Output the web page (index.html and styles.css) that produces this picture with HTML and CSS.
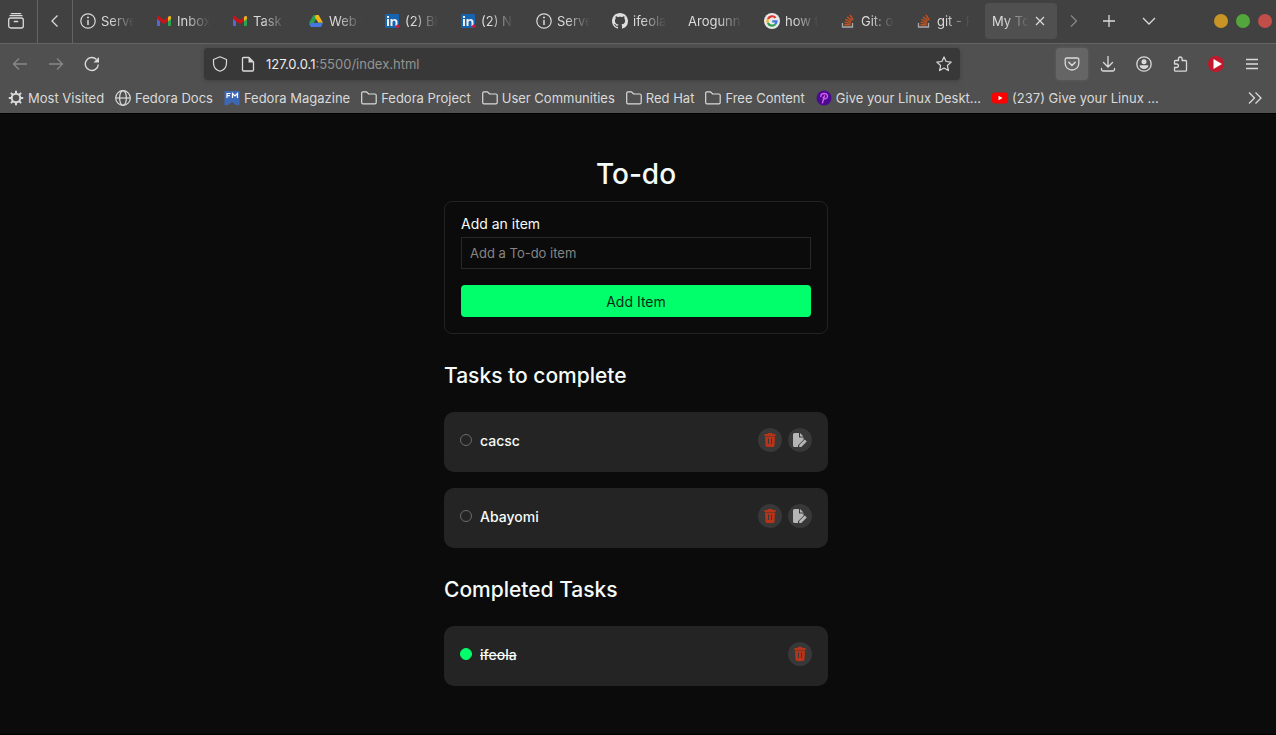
FILE: index.html
```html
<!DOCTYPE html>
<html lang="en">
<head>
<meta charset="utf-8">
<title>My ToDo</title>
<link rel="stylesheet" href="styles.css">
</head>
<body>
<svg class="defs" aria-hidden="true">
  <symbol id="info" viewBox="0 0 16 16"><g fill="none" stroke="currentColor" stroke-width="1.2"><circle cx="8" cy="8" r="7.2"/><path d="M8 7v5" stroke-width="1.5"/></g><circle cx="8" cy="4.6" r="1" fill="currentColor"/></symbol>
  <symbol id="gmail" viewBox="0 0 16 16"><path fill="#5468d8" d="M1 5l3 2.2V13H2a1 1 0 0 1-1-1z"/><path fill="#2aa350" d="M12 7.2L15 5v7a1 1 0 0 1-1 1h-2z"/><path fill="#f0b020" d="M12 4l1-.8c1-.6 2 0 2 1.100V6l-3 2.200z"/><path fill="#c5151a" d="M1 6V4.300c0-1.200 1.200-1.700 2-1.100l5 3.700 4-3v4.300L8 11 4 8.200z"/></symbol>
  <symbol id="drive" viewBox="0 0 16 16"><path fill="#2c9f50" d="M5.500 2h5L4 13.500 1 9.800z"/><path fill="#f2b619" d="M8 2h2.600L15 9.800h-4.700L6.800 4z"/><path fill="#4379dc" d="M5 9.800h10L13 14H3L1 11z"/><path fill="#444" d="M8 6.500l2 3.300H6z"/></symbol>
  <symbol id="linkedin" viewBox="0 0 16 16"><rect x="1" y="1" width="14" height="14" rx="1" fill="#1663b0"/><path fill="#eee" d="M3 6h2v7H3zM3 3h2v2H3zM6.500 6h2v1c1.200-1.800 5-1.500 5 1.700V13h-2V9.300c0-2.300-3-2.100-3 0V13h-2z"/><circle cx="13.800" cy="13.200" r="1.700" fill="#d01835"/></symbol>
  <symbol id="github" viewBox="0 0 16 16"><path fill="#ddd" d="M8 0C3.580 0 0 3.580 0 8c0 3.540 2.290 6.530 5.470 7.590.4.070.55-.17.55-.38 0-.19-.01-.82-.01-1.490-2.010.37-2.530-.49-2.690-.94-.09-.23-.48-.94-.82-1.130-.28-.15-.68-.52-.01-.53.63-.01 1.080.58 1.230.82.720 1.210 1.870.87 2.330.66.07-.52.28-.87.51-1.070-1.780-.2-3.640-.89-3.640-3.950 0-.87.31-1.590.82-2.150-.08-.2-.36-1.020.08-2.120 0 0 .67-.21 2.200.82.640-.18 1.320-.27 2-.27s1.360.09 2 .27c1.530-1.040 2.200-.82 2.200-.82.44 1.100.16 1.920.08 2.120.51.56.82 1.270.82 2.150 0 3.070-1.870 3.750-3.650 3.950.29.25.54.73.54 1.480 0 1.070-.01 1.930-.01 2.200 0 .21.15.46.55.38A8.010 8.010 0 0 0 16 8c0-4.420-3.580-8-8-8z"/></symbol>
  <symbol id="google" viewBox="0 0 16 16"><circle cx="8" cy="8" r="8" fill="#e8e8e8"/><g fill="none" stroke-width="2.200"><path stroke="#d93a30" d="M11.600 4.900A4.600 4.600 0 0 0 3.900 6"/><path stroke="#efb51b" d="M3.900 6a4.600 4.600 0 0 0 0 4"/><path stroke="#2b9d4d" d="M3.900 10a4.600 4.600 0 0 0 7.200 1.500"/><path stroke="#3e78df" d="M11.100 11.500A4.600 4.600 0 0 0 12.500 8.300H8.200"/></g></symbol>
  <symbol id="stack" viewBox="0 0 16 16"><path fill="none" stroke="#aaa" stroke-width="1.300" d="M2.500 10v4h10v-4"/><path fill="none" stroke="#c5511d" stroke-width="1.400" d="M4.500 11.800h6M4.600 9.200l6 1.200M5.400 6.400l5.600 2.700M7.200 3.900l4.600 3.900M10 2l3.200 5"/></symbol>
  <symbol id="folder" viewBox="0 0 16 16"><path fill="none" stroke="currentColor" stroke-width="1.200" stroke-linejoin="round" d="M.7 3a1.200 1.200 0 0 1 1.200-1.200h3.600L7.700 4h6.100A1.300 1.300 0 0 1 15.200 5.300v7.200a1.300 1.300 0 0 1-1.300 1.300H2A1.300 1.300 0 0 1 .7 12.500z"/></symbol>
  <symbol id="trash" viewBox="0 0 16 16"><path fill="#b83418" fill-rule="evenodd" d="M6 1h4l.7 1H13.500v2h-11V2h2.800zM3 4.500h10l-.5 9a1.700 1.700 0 0 1-1.700 1.500H5.200a1.700 1.700 0 0 1-1.700-1.500zM6 6.500v5.500h1V6.500zm3 0v5.500h1V6.500z"/></symbol>
  <symbol id="edit" viewBox="0 0 16 16"><path fill="#b5b5b5" d="M2.500 1H7v4.500h4.500v2.200L6 13.300V15H2.500A1.500 1.500 0 0 1 1 13.500v-11A1.500 1.500 0 0 1 2.500 1zM8 1l3.500 3.500H8zM7.200 15v-2.100l5.500-5.500 2.100 2.100L9.300 15z"/></symbol>
</svg>

<header class="browser">
  <div class="tabstrip">
    <button class="chrome-btn view" aria-label="Recent browsing"><svg class="icon" viewBox="0 0 16 16"><g fill="none" stroke="currentColor" stroke-width="1.300" stroke-linecap="round"><rect x=".7" y="5" width="14.600" height="10" rx="2"/><path d="M2 2.700h12M3.300.7h9.400M6.300 8.500h3.400"/></g></svg></button>
    <button class="chrome-btn prev" aria-label="Scroll tabs left"><svg class="icon" viewBox="0 0 16 16"><path fill="none" stroke="currentColor" stroke-width="1.300" d="M10.500 2.500L5 8l5.500 5.500"/></svg></button>
    <nav class="tabs" aria-label="Tabs">
      <a class="tab" href="#"><svg class="icon"><use href="#info"/></svg><span>Serve</span></a>
      <a class="tab" href="#"><svg class="icon"><use href="#gmail"/></svg><span>Inbox</span></a>
      <a class="tab" href="#"><svg class="icon"><use href="#gmail"/></svg><span>Task</span></a>
      <a class="tab" href="#"><svg class="icon"><use href="#drive"/></svg><span>Web I</span></a>
      <a class="tab" href="#"><svg class="icon"><use href="#linkedin"/></svg><span>(2) Bl</span></a>
      <a class="tab" href="#"><svg class="icon"><use href="#linkedin"/></svg><span>(2) N</span></a>
      <a class="tab" href="#"><svg class="icon"><use href="#info"/></svg><span>Serve</span></a>
      <a class="tab" href="#"><svg class="icon"><use href="#github"/></svg><span>ifeola</span></a>
      <a class="tab" href="#"><span>Arogunn</span></a>
      <a class="tab" href="#"><svg class="icon"><use href="#google"/></svg><span>how t</span></a>
      <a class="tab" href="#"><svg class="icon"><use href="#stack"/></svg><span>Git: o</span></a>
      <a class="tab" href="#"><svg class="icon"><use href="#stack"/></svg><span>git - P</span></a>
      <div class="tab active"><span>My To</span><button class="close" aria-label="Close tab"><svg viewBox="0 0 10 10"><path fill="none" stroke="currentColor" stroke-width="1.200" d="M1 1l8 8M9 1L1 9"/></svg></button></div>
    </nav>
    <button class="chrome-btn next dim" aria-label="Scroll tabs right"><svg class="icon" viewBox="0 0 16 16"><path fill="none" stroke="currentColor" stroke-width="1.300" d="M5 2.500L10.500 8 5 13.500"/></svg></button>
    <button class="chrome-btn" aria-label="New tab"><svg class="icon" viewBox="0 0 16 16"><path fill="none" stroke="currentColor" stroke-width="1.300" d="M8 2v12M2 8h12"/></svg></button>
    <button class="chrome-btn list" aria-label="List all tabs"><svg class="icon" viewBox="0 0 16 16"><path fill="none" stroke="currentColor" stroke-width="1.300" d="M2 5l6 6 6-6"/></svg></button>
    <div class="window-controls">
      <button class="dot amber" aria-label="Minimize"></button>
      <button class="dot green" aria-label="Maximize"></button>
      <button class="dot red" aria-label="Close window"></button>
    </div>
  </div>

  <div class="toolbar">
    <div class="tools">
      <button class="tool dim" aria-label="Back"><svg class="icon" viewBox="0 0 16 16"><path fill="none" stroke="currentColor" stroke-width="1.300" d="M15 8H1.500M7 2.500L1.500 8 7 13.500"/></svg></button>
      <button class="tool dim" aria-label="Forward"><svg class="icon" viewBox="0 0 16 16"><path fill="none" stroke="currentColor" stroke-width="1.300" d="M1 8h13.500M9 2.500L14.500 8 9 13.500"/></svg></button>
      <button class="tool" aria-label="Reload"><svg class="icon" viewBox="0 0 16 16"><path fill="none" stroke="currentColor" stroke-width="1.400" d="M14.300 8.500A6.500 6.500 0 1 1 12.500 3.500"/><path fill="currentColor" d="M15 1v5.500H9.500z"/></svg></button>
    </div>
    <div class="urlbar">
      <svg class="icon" viewBox="0 0 16 16"><path fill="none" stroke="currentColor" stroke-width="1.200" stroke-linejoin="round" d="M8 .8L14.500 3.500V7c0 4-2.500 7-6.500 8.300C4 14 1.500 11 1.500 7V3.500z"/></svg>
      <svg class="icon doc" viewBox="0 0 16 16"><path fill="none" stroke="currentColor" stroke-width="1.300" stroke-linejoin="round" d="M2.500 2.500a1 1 0 0 1 1-1H9L13.500 6v8a1 1 0 0 1-1 1h-9a1 1 0 0 1-1-1z"/><path fill="currentColor" d="M8.500 1.500L13.500 6.500h-5z"/></svg>
      <div class="url">127.0.0.1<span>:5500/index.html</span></div>
      <button class="star" aria-label="Bookmark this page"><svg class="icon" viewBox="0 0 16 16"><path fill="none" stroke="currentColor" stroke-width="1.200" stroke-linejoin="round" d="M8 .9l2.100 4.600 5.100.6-3.800 3.400 1 5.100L8 12.100l-4.400 2.500 1-5.100L.8 6.100l5.100-.6z"/></svg></button>
    </div>
    <div class="tools">
      <button class="tool pocket" aria-label="Save to Pocket"><svg class="icon" viewBox="0 0 16 16"><g fill="none" stroke="currentColor" stroke-width="1.300" stroke-linecap="round"><path d="M2.500 2h11a1.300 1.300 0 0 1 1.300 1.300V7.500a6.800 6.500 0 0 1-13.600 0V3.300A1.300 1.300 0 0 1 2.500 2z"/><path d="M4.800 6.300L8 9.500l3.200-3.200" stroke-width="1.500"/></g></svg></button>
      <button class="tool" aria-label="Downloads"><svg class="icon" viewBox="0 0 16 16"><path fill="none" stroke="currentColor" stroke-width="1.300" stroke-linecap="round" d="M8 .5v10M3.500 6.500L8 11l4.500-4.500M1.500 12.500v.7a1.800 1.800 0 0 0 1.800 1.800h9.400a1.800 1.800 0 0 0 1.800-1.800v-.7"/></svg></button>
      <button class="tool" aria-label="Account"><svg class="icon" viewBox="0 0 16 16"><circle cx="8" cy="8" r="7.200" fill="none" stroke="currentColor" stroke-width="1.300"/><circle cx="8" cy="5.800" r="2.500" fill="currentColor"/><path fill="currentColor" d="M3.500 9.200h9C12 11.800 10.500 13 8 13s-4-1.200-4.500-3.800z"/></svg></button>
      <button class="tool" aria-label="Extensions"><svg class="icon" viewBox="0 0 16 16"><path fill="none" stroke="currentColor" stroke-width="1.300" stroke-linejoin="round" d="M2.500 8V5.500a1 1 0 0 1 1-1h3V2.800a1.800 1.800 0 0 1 3.600 0v1.700h3.400a1 1 0 0 1 1 1v8.700a1 1 0 0 1-1 1h-10a1 1 0 0 1-1-1v-2.700h2.200a1.700 1.700 0 0 0 0-3.500z"/></svg></button>
      <button class="tool" aria-label="Video extension"><svg class="icon" viewBox="0 0 16 16"><circle cx="8" cy="8" r="8" fill="#c2182b"/><path d="M5.500 3v10L14 8z" fill="#fff"/></svg></button>
      <button class="tool" aria-label="Application menu"><svg class="icon" viewBox="0 0 16 16"><path fill="none" stroke="currentColor" stroke-width="1.300" d="M2 3.500h12M2 8h12M2 12.500h12"/></svg></button>
    </div>
  </div>

  <nav class="bookmarks" aria-label="Bookmarks">
    <a href="#"><svg class="mark" viewBox="0 0 16 16"><g fill="none" stroke="currentColor"><circle cx="8" cy="8" r="4.300" stroke-width="2"/><path stroke-width="2" d="M8 .8v3M8 12.200v3M.8 8h3M12.200 8h3M2.900 2.900l2 2M11.100 11.100l2 2M13.100 2.900l-2 2M4.900 11.100l-2 2"/></g></svg>Most Visited</a>
    <a href="#"><svg class="mark" viewBox="0 0 16 16"><g fill="none" stroke="currentColor" stroke-width="1.200"><circle cx="8" cy="8" r="7.300"/><ellipse cx="8" cy="8" rx="3.400" ry="7.300"/><path d="M.7 8h14.600"/></g></svg>Fedora Docs</a>
    <a href="#"><svg class="mark" viewBox="0 0 16 16"><path fill="#3c68b5" d="M.5 1h15v14H12l-4-3-4 3H.5z"/><path fill="none" stroke="#fff" stroke-width="1.200" d="M3 8V3.500h3.500M3 5.700h3M8.500 8V3.500L11 6l2.500-2.500V8"/></svg>Fedora Magazine</a>
    <a href="#"><svg class="mark"><use href="#folder"/></svg>Fedora Project</a>
    <a href="#"><svg class="mark"><use href="#folder"/></svg>User Communities</a>
    <a href="#"><svg class="mark"><use href="#folder"/></svg>Red Hat</a>
    <a href="#"><svg class="mark"><use href="#folder"/></svg>Free Content</a>
    <a href="#"><svg class="mark" viewBox="0 0 16 16"><circle cx="8" cy="8" r="7.500" fill="#4b0b91"/><path fill="none" stroke="#d65cf0" stroke-width="1.400" stroke-linecap="round" d="M4.800 6.500C4.800 2.500 11.500 2.500 11.500 6.300c0 3-3.800 3.300-4.300 1.200M8.500 5.800L6.500 12.800"/></svg>Give your Linux Deskt…</a>
    <a href="#"><svg class="mark" viewBox="0 0 16 16"><rect x="0" y="2.500" width="16" height="11" rx="3" fill="#f00"/><path fill="#fff" d="M6.500 5.800v4.400l4-2.200z"/></svg>(237) Give your Linux …</a>
    <button class="more" aria-label="More bookmarks"><svg class="icon" viewBox="0 0 16 16"><path fill="none" stroke="currentColor" stroke-width="1.300" d="M2 2.500L7.500 8 2 13.500M8.500 2.500L14 8l-5.500 5.500"/></svg></button>
  </nav>
</header>

<main class="page">
  <div class="todo">
    <h1>To-do</h1>
    <form class="add">
      <label for="item">Add an item</label>
      <input id="item" type="text" placeholder="Add a To-do item">
      <button type="button">Add Item</button>
    </form>

    <h2>Tasks to complete</h2>
    <ul class="tasks">
      <li class="task">
        <input type="checkbox" id="t1"><label for="t1">cacsc</label>
        <div class="actions">
          <button aria-label="Delete cacsc"><svg><use href="#trash"/></svg></button>
          <button aria-label="Edit cacsc"><svg><use href="#edit"/></svg></button>
        </div>
      </li>
      <li class="task">
        <input type="checkbox" id="t2"><label for="t2">Abayomi</label>
        <div class="actions">
          <button aria-label="Delete Abayomi"><svg><use href="#trash"/></svg></button>
          <button aria-label="Edit Abayomi"><svg><use href="#edit"/></svg></button>
        </div>
      </li>
    </ul>

    <h2>Completed Tasks</h2>
    <ul class="tasks">
      <li class="task">
        <input type="checkbox" id="t3" checked><label for="t3">ifeola</label>
        <div class="actions">
          <button aria-label="Delete ifeola"><svg><use href="#trash"/></svg></button>
        </div>
      </li>
    </ul>
  </div>
</main>
</body>
</html>
```

FILE: styles.css
```css
* { box-sizing: border-box; }

body {
  margin: 0;
  min-height: 100vh;
  display: flex;
  flex-direction: column;
  background: #0b0b0b;
  color: #f4fbf8;
  font-family: Inter, "Liberation Sans", sans-serif;
}

button {
  padding: 0;
  border: 0;
  background: none;
  color: inherit;
  font: inherit;
}

a { color: inherit; text-decoration: none; }
.defs { display: none; }
.icon { flex: none; display: block; width: 16px; height: 16px; }

/* Browser chrome */
.browser {
  background: #505050;
  color: #dadada;
  font-size: 13px;
  border-bottom: 1px solid #000;
}

.tabstrip {
  display: flex;
  align-items: center;
  height: 44px;
  background: #414141;
  border-bottom: 1px solid #646464;
}

.chrome-btn {
  flex: none;
  display: grid;
  place-items: center;
  width: 36px;
  height: 100%;
  padding-bottom: 1px;
}
.view { width: 38px; padding-right: 5px; border-right: 1px solid #646464; }
.prev { width: 35px; border-right: 1px solid #646464; }
.next { width: 34px; }
.list { width: 44px; }
.dim { color: #888; }

.tabs { display: flex; gap: 4px; padding-bottom: 1px; }

.tab {
  flex: none;
  display: flex;
  align-items: center;
  gap: 5px;
  width: 72px;
  height: 36px;
  padding: 0 5px 0 7px;
  border-radius: 4px;
}
.tab span {
  flex: 1;
  min-width: 0;
  overflow: hidden;
  white-space: nowrap;
  mask-image: linear-gradient(to left, transparent 6px, #000 30px);
}
.tab.active { gap: 0; padding-right: 12px; background: #505050; }
.close { flex: none; width: 10px; height: 10px; }
.close svg { display: block; width: 10px; height: 10px; }

.window-controls { display: flex; gap: 8px; margin-left: auto; padding: 0 4px 1px 0; }
.dot { width: 14px; height: 14px; border-radius: 50%; }
.amber { background: #c99426; }
.green { background: #53a63c; }
.red { background: #c24e4a; }

.toolbar {
  display: flex;
  align-items: center;
  justify-content: space-between;
  height: 40px;
  padding: 0 8px 0 4px;
}
.tools { display: flex; gap: 4px; }
.tool {
  display: grid;
  place-items: center;
  width: 32px;
  height: 32px;
  border-radius: 4px;
}
.pocket { background: #656565; box-shadow: 0 0 3px #656565; }

.urlbar {
  flex: 1;
  display: flex;
  align-items: center;
  height: 32px;
  margin: 0 96px;
  padding: 0 8px;
  border-radius: 4px;
  background: #383838;
  box-shadow: 0 1px 4px #404040;
}
.doc { margin: 0 10px 0 12px; }
.url { flex: 1; font-size: 13px; color: #ececec; }
.url span { color: #949494; }

.bookmarks {
  display: flex;
  align-items: center;
  gap: 11px;
  height: 29px;
  padding: 0 13px 1px 8px;
}
.bookmarks a { display: flex; align-items: center; gap: 4px; white-space: nowrap; }
.mark { flex: none; width: 16px; height: 16px; }
.more { margin-left: auto; }

/* To-do page */
.page {
  flex: 1;
  padding: 41px 4px 48px 0;
  border-bottom: 1px solid #000;
}
.todo { max-width: 384px; margin: 0 auto; }

h1, h2 { margin: 0; font-weight: 500; }
h1 { margin-bottom: 8px; font-size: 28px; line-height: 38px; text-align: center; }
h2 { padding: 24px 0 18px; font-size: 21px; line-height: 36px; }

.add {
  display: flex;
  flex-direction: column;
  padding: 12px 16px 16px;
  border: 1px solid #222;
  border-radius: 8px;
}
.add label { font-size: 14px; line-height: 20px; margin-bottom: 3px; }
.add input {
  height: 32px;
  padding: 0 8px;
  border: 1px solid #282828;
  background: transparent;
  color: inherit;
  font: 13px Inter, sans-serif;
}
.add input::placeholder { color: #858585; opacity: 1; }
.add button {
  height: 32px;
  margin-top: 16px;
  border-radius: 4px;
  background: #00ff6a;
  color: #062d14;
  font-size: 14px;
}

.tasks {
  display: flex;
  flex-direction: column;
  gap: 16px;
  margin: 0;
  padding: 0;
  list-style: none;
}
.task {
  display: flex;
  align-items: flex-start;
  min-height: 60px;
  padding: 16px;
  border-radius: 10px;
  background: #242424;
}
.task input {
  appearance: none;
  width: 12px;
  height: 12px;
  margin: 6px 8px 0 0;
  border: 1px solid #6b6b6b;
  border-radius: 50%;
}
.task input:checked { border-color: #00ff6a; background: #00ff6a; }
.task label { flex: 1; font-size: 14px; font-weight: 500; line-height: 26px; }
.task input:checked + label { text-decoration: line-through; }

.actions { display: flex; gap: 6px; }
.actions button {
  display: grid;
  place-items: center;
  width: 24px;
  height: 24px;
  border-radius: 50%;
  background: #383838;
}
.actions svg { width: 16px; height: 16px; }
```
